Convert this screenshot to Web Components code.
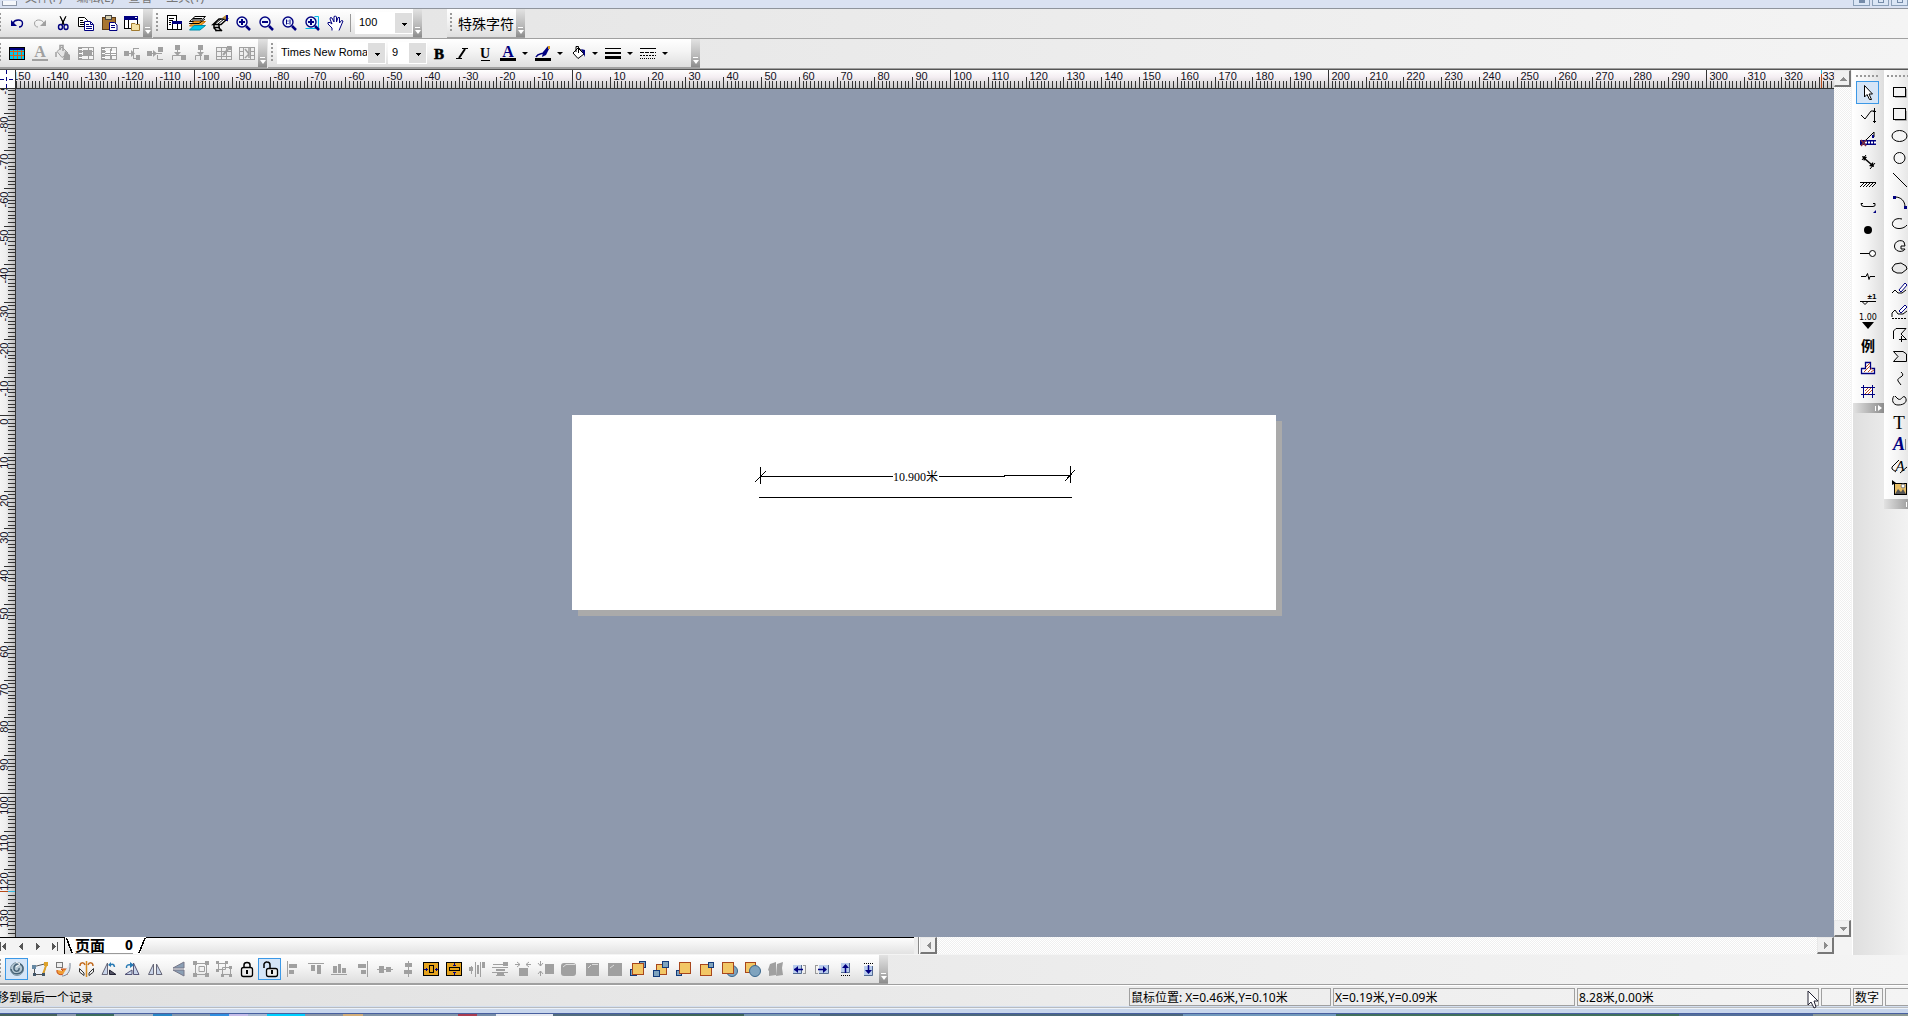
<!DOCTYPE html>
<html lang="zh-CN">
<head>
<meta charset="utf-8">
<title>绘图</title>
<style>
html,body{margin:0;height:100%}
body{overflow:hidden;font:12px/16px "Noto Sans","Noto Sans CJK SC",sans-serif;color:#000}
</style>
</head>
<body>
<draw-app></draw-app>
<script>
const G='#a0a0a0', N='#000080';
const r=(x,y,w,h,f,s)=>`<rect x="${x}" y="${y}" width="${w}" height="${h}" fill="${f||'none'}"${s?` stroke="${s}"`:''}/>`;
const p=(d,s,f,w)=>`<path d="${d}" stroke="${s||'none'}" fill="${f||'none'}"${w?` stroke-width="${w}"`:''}/>`;
const t=(s,x,y,size,extra)=>`<text x="${x}" y="${y}" font-size="${size}" text-anchor="middle" stroke="none" ${extra||''}>${s}</text>`;
const serif='font-family="Liberation Serif" ';
const lens=c=>`<circle cx="8" cy="8" r="5" fill="#eef6ff" stroke="${N}" stroke-width="1.4"/>`+p('M12 12L16 16',N,'',2.5)+c;
const gray=s=>p(s,G,'',1);
const tableGray=r(1.5,3.5,15,12,'#f4f4f4',G)+r(1,3,4,13,G)+p('M1 7.5H17M1 11.5H17M11.5 3V16',G)+p('M2 5.5H5M2 9.5H5M2 13.5H5','#fff');
const box=(x,y,w,h)=>r(x,y,w,h,G);
const orange=(x,y,s)=>r(x+.5,y+.5,s,s,'#f2c766','#a8461c');
const blueBox=(x,y,s)=>r(x+.5,y+.5,s,s,'#7fa3be','#123a7a');
const fold='#c9d5ea';
const pointer='M0 0V14L3 11L6 17L8 16L6 10H10Z';

const ICONS={
 undo:p('M5 9C7 5 14 5 14.500 9C14.500 12 13 13 11 13',N,'',1.4)+p('M3 6V12H9Z','',N),
 redo:p('M13 9C11 5 4 5 3.500 9C3.500 12 5 13 7 13',G,'',1)+p('M15 6V12H9Z','',G),
 cut:p('M6 2L10 11M12 2L8 11M6.500 3L10.500 11M11.500 3L7.500 11','#000')+`<g fill="none" stroke="${N}" stroke-width="1.400"><ellipse cx="6.500" cy="13" rx="2" ry="2.500"/><ellipse cx="12" cy="13" rx="2" ry="2.500"/></g>`,
 copy:p('M1.500 3.500H7.500L10.500 6.500V12.500H1.500Z','#000','#fff')+p('M3 6.500H6M3 8.500H8M3 10.500H8','#000')+p('M7.500 7.500H13.500L16.500 10.500V16.500H7.500Z',N,'#fff')+p('M9 10.500H12M9 12.500H15M9 14.500H15M13.500 8V10.500H16',N),
 paste:r(2.500,3.500,13,12,'#a87532','#5a3b18')+r(5.500,1.500,6,4,'#d8d0b0','#444')+p('M9.500 8.500H14.500L17 11V16.500H9.500Z',N,'#fff')+p('M11 11.500H15M11 13.500H15',N),
 props:r(1.500,2.500,13,12,'#fff','#000')+r(1,2,14,4,N)+p('M5.500 6V14','#000')+p('M8.500 9.500H12L13 10.500H16.500V16.500H8.500Z','#a07a30','#f4e1a4')+r(12,3,2,1,'#fff'),
 pageopt:r(2.500,1.500,9,14,'#fff','#000')+p('M4 4.500H9M4 6.500H8M4 8.500H6M4 10.500H6','#000')+r(7.500,7.500,9,8,'#fff','#000')+r(7,7,10,3,N)+p('M12.500 10V15','#000'),
 layers:p('M7 2.500H17.500L12 7.500H1.500Z','#000','#fff')+p('M5 4.500H14M4 6H13','#000')+p('M6 7.500H17.500L12 12H1.500Z','#c96b00','#efa52e')+p('M6 11.500H17.500L12 16H1.500Z','#008aa8','#00c8ec')+p('M1 9.500H11L17 5','#000'),
 hatch:p('M2 10.500L8 5H16L10 10.500ZM3 13.500H9M4 16.500H11M3 10V14L6 17M8 10V14L11 17','#000','#fff',1.500)+p('M4 10L10 5M7 10L13 5','#000')+p('M11 4L15 1L17 2V8L14 5Z','', '#b88b36')+r(15,1,2,6,N),
 zoomin:lens(p('M8 5V11M5 8H11',N,'',2)),
 zoomout:lens(p('M5 8H11',N,'',2)),
 zoom11:lens(p('M6.500 5.500V10.500M10 5.500V10.500M8 6.500V7.500M8 9V10',N)),
 zoomfit:p('M11.500 2.500H15.500V14.500H9','#00b8e8','#d8f6ff')+lens(p('M8 5V11M5 8H11',N,'',2))+p('M2.500 14.500H9','#00b8e8'),
 hand:p('M6 16.500V14L2 10V8.500H4L6 10L4 5L4.500 3.500L6 4L8 8V2.500L9.500 2L10.500 3V8L12 3.500H13.500V9L15.500 6.500L17 7L14.500 13L13 16.500',N,'#fff'),
 table:r(1.500,3.500,15,12,'#00c8f0','#000')+r(2,4,14,2,N)+p('M2 7.500H16M2 11.500H16M5.500 6V15M9.500 6V15M13.500 6V15','#d86018'),
 fontgray:t('A',9,13,16,serif+`font-weight="bold" fill="${G}"`)+r(1,15,16,2,G),
 bucketgray:p('M3 7.500L8 3L14 9L8 13.500Z',G,'#e4e4e4')+p('M6 6V1.500H9V7M2 8V13',G,'',1.5)+p('M11 7L16 11V16H9Z','',G),
 mergecells:tableGray+r(6,6,9,5,G),
 splitcells:tableGray+r(6,7,10,4,'#fff')+p('M5 9.500H16M10.500 5V15',G),
 rowleft:box(1,7,5,5)+gray('M6 9.500H11M10.500 4V15M10 4.500H16M10 14.500H16')+p('M8 6L12 9.500L8 13Z','',G)+box(13,11,4,5),
 rowright:box(1,7,5,5)+gray('M6 9.500H16M11.500 11V15.500H17')+p('M7 6L11 9.500L7 13Z','',G)+box(12,3,5,5),
 colup:box(6,1,5,5)+gray('M8.500 6V11M3.500 16V11.500H14.500V16')+box(12,11,5,5)+p('M5 8H12L8.500 12Z','',G),
 coldown:box(6,1,5,5)+gray('M8.500 6V16M3.500 16V11.500H10')+box(12,11,5,5)+p('M5 8H12L8.500 12Z','',G),
 rowsize:r(1.500,3.500,15,12,'#eee',G)+p('M1 7.500H17M1 12.500H17M6.500 3V16M11.500 3V16',G)+p('M8 11L15 3H12M15 3V6',G,'',2),
 colsize:r(1.500,3.500,15,12,'#eee',G)+p('M1 7.500H5M13 7.500H17M1 11.500H5M13 11.500H17M5.500 3V16M12.500 3V16',G)+p('M7 5L11 10L7 14M11 4V14',G,'',1.500),
 bold:t('B',9,15,15,serif+'font-weight="bold" style="stroke:#000;stroke-width:.6"'),
 italic:p('M12 5L6 14','#000','',2)+p('M9 4.500H15M3 14.500H9','#000'),
 under:t('U',9,14,14,serif+'font-weight="bold"')+p('M5 16.500H14','#000'),
 fontcol:t('A',9,13,16,serif+`font-weight="bold" fill="${N}"`)+r(1,14,16,3,'#000'),
 pencol:p('M2 13C5 7 10 13 14 4',N,'',1.5)+p('M9 8L14 2L16 3L12 11L8 13Z','',N)+r(14,2,2,3,'#d99b20')+r(1,14,16,3,'#000'),
 fillcol:p('M4 9L9 4L15 10L9 14.500Z','#000','#fff')+p('M7 8V2.500H9.500V9M10 4L14 9','#000')+p('M12 5L16 6V13L14 9Z','',N),
 lines:r(1,4,16,1,'#000')+r(1,8,16,2,'#000')+r(1,12,16,3,'#000'),
 dashes:`<g stroke="#000" fill="none"><path d="M1 4.500H17"/><path stroke-dasharray="4 1" d="M1 8.500H17"/><path stroke-dasharray="2 1" d="M1 11.500H17"/><path stroke-dasharray="1 1" d="M1 14.500H17"/></g>`,

 arrow:p('M5.500 2.500V14L8 11.500L10.500 16.500H12.500L10 11H13.500Z','#000','#fff'),
 poly:p('M2 9L6 13L12 5H15.500M15.500 2V17M14 5.500H17M14 15.500H17','#000'),
 measure:p('M4 14L15 3V8','#000')+r(1,11,16,5,N)+p('M6 13.500H17','#fff','','2')+p('M8.500 12V16M11.500 12V16M14.500 12V16',N)+p('M2 11L7 17M7 11L2 17','#803040','',1.5)+r(13,6,2,3,N),
 dim:p('M5 6L13 13','#000','',1.5)+p('M3 8L7 3M11 17L16 11','#000')+p('M3 4L8 5L5 9ZM10 14L14 10L15 15Z','','#000'),
 hatching:p('M1 7.500H17M1 12L5 8M4 12L8 8M7 12L11 8M10 12L14 8M13 12L17 8','#000'),
 brace:p('M2 5.500Q2 8.500 5 8.500H14Q17 8.500 16 5.500M2 5.500H4M14 5.500H16','#000')+p('M17 12V15H14Z','',N),
 dot:'<circle cx="9" cy="9" r="4" fill="#000"/>',
 pin:p('M1 9.500H11','#000')+'<circle cx="13.500" cy="9.500" r="3" fill="#fff" stroke="#000"/>',
 breakline:p('M2 9.500H7L8.500 6.500L10 12.500L11 9.500H16','#000'),
 level:p('M1 11.500H17M3 11.500L6 14.500L9 11.500','#000')+t('±1',13,9,8,'font-family="Liberation Sans" font-weight="bold"'),
 scale:t('1.00',9,7,8,'font-family="DejaVu Sans"')+p('M3 9H15L9 16Z','','#000'),
 legend:t('例',9,15,14,'font-family="Noto Sans CJK SC" font-weight="bold"'),
 shapeA:`<path d="M6.500 3.500H11.500V9.500H15.500V14.500H2.500V9.500H6.500Z" fill="#fff" stroke="${N}" stroke-width="1.300"/>`+p('M7 8L11 4M5 13L11 7M9 13L13 9M12 13L15 11','#c05020'),
 shapeB:r(4.500,5.500,9,7,'#fff',N)+p('M4.500 3V16M13.500 3V16M2 5.500H16M2 12.500H16',N)+p('M6 9L9 6M6 12L12 6M9 12L13 8','#c05020'),

 rect:p('M5 14.500H16.500V6','#aaa')+r(3.500,4.500,12,9,'#f4f4f4','#000'),
 square:p('M5 15.500H16.500V6','#aaa')+r(3.500,3.500,12,11,'#f4f4f4','#000'),
 ellipse:'<ellipse cx="9.500" cy="9" rx="7.500" ry="5.500" fill="#f4f4f4" stroke="#000"/>',
 circle:'<circle cx="9.500" cy="9" r="5.500" fill="#f4f4f4" stroke="#000"/>',
 line:p('M3 2L17 16','#000'),
 arc:p('M5 4C11 4 15 8 15 14','#000')+r(3,3,3,3,N)+r(14,13,3,3,N),
 oarc:p('M12 4C4 2 1 8 3 11C6 15 14 14 17 10','#000'),
 pie:p('M11 9V12H15C14 15 6 16 4.500 10C4 4 11 2 14 5L15 9Z','#000','#f0f0f0'),
 blob:p('M2 9L5 5L11 4L16 7L17 10L12 14H7L3 12Z','#000','#e8e8e8'),
 free:p('M2 12L5 9L8 12H12L16 9','#000')+p('M9 9L15 2L17 4L11 11Z',N,'#fff'),
 freeclosed:p('M2 14V10L5 7L8 11H13L17 8','#000')+`<path d="M2 15.500H17" stroke="#000" stroke-dasharray="2 1"/>`+p('M9 8L15 2L17 4L11 10Z',N,'#fff'),
 polyline:p('M3.500 14V6L6 3.500H16L11 9L16.500 14.500H9M11.500 11V17','#000'),
 flag:p('M3.500 4.500H13L16.500 7V14.500H3.500L8 9.500Z','#000','#e8e8e8'),
 curve:p('M11 3C17 8 6 8 8 12L11 16','#000'),
 bag:p('M4 5C1 9 3 14 8 14C15 14 18 10 15 6C12 4 12 10 8 8L5 5','#000','#eee'),
 textT:t('T',9,16,19,serif),
 textA:t('A',9,15,18,serif+`font-style="italic" font-weight="bold" fill="${N}"`)+p('M15.500 4V15','#888'),
 artA:t('A',10,14,15,serif+'font-style="italic"')+p('M2 10L9 3M10 16L17 10M2 10V12L6 15','#000'),
 image:r(4.500,4.500,12,11,'#e7bd63','#000')+p('M5 15L8 10L11 13L13 10L16 15Z','','#555')+'<circle cx="13" cy="7" r="2" fill="#fff" stroke="#777"/>'+p('M2 1L6 4L2 6Z','','#000'),

 spiral:`<circle cx="9" cy="9" r="6.500" fill="#b5c8d4" stroke="#7f96a6"/>`+p('M3 9C4 16 15 15 15 8C14 2 5 3 6 9C7 13 12 11 11 8','#466276','',1.5)+p('M8 2L12 4L8 7','#fff'),
 skew:p('M3.500 6.500L15.500 3.500L12.500 14.500H3.500Z','#555','#edf2fa')+p('M12 14L16 3','#e0a32a','',2)+r(1,5,4,4,'#6588a4')+r(13,2,4,4,'#dda22b')+r(2,13,3,3,'#405568')+r(11,13,3,3,'#405568'),
 rotate:r(2.500,2.500,6,5,'#eee','#777')+p('M3 10C2 15 8 16 11 13L13 15V9L7 9L9 11','#c84a16','#ef9d36')+p('M16 3C17 13 12 16 8 16','#7b8797','#e2e8ef'),
 fliph:p('M9.500 1V17','#d68a20','',1.5)+p('M3 6C3 2 7 2 8 5M11 5C12 2 16 2 16 6','#c06a20','',1.5)+p('M2.500 8.500L7 13V15.500L2.500 12ZM16.500 8.500L12 13V15.500L16.500 12Z','#333','#eee'),
 rot90l:p('M7.500 3V14.500H2Z','#667',fold)+p('M9.500 10L16 14.500H9.500Z','#223','#556')+p('M10 5Q14 3 14.500 7','#287ab4','',1.5)+p('M11 2V7L8 5Z','','#287ab4'),
 rot90r:p('M10.500 3V14.500H16Z','#557',fold)+p('M9 10L2 14.500H9Z','#557',fold)+p('M3.500 8Q3 4 8 5','#287ab4','',1.5)+p('M7 2L11 5L7 8Z','','#287ab4'),
 mirrorh:p('M7.500 4V14.500H2.500ZM10.500 4V14.500H16Z','#667',fold),
 mirrorv:p('M15 2V8H4ZM15 10V16L4 10Z','#778','#8a9fb5'),
 group:p('M3.500 3.500H14.500V14.500H3.500ZM7 6.500H12.500V11.500H7Z',G)+[[1,1],[13,1],[1,13],[13,13]].map(a=>box(a[0],a[1],4,4)).join(''),
 ungroup:p('M3.500 3.500H10.500V9.500H3.500ZM7.500 7.500H15.500V14.500H7.500Z',G)+[[1,1],[10,1],[1,9],[14,6],[6,14],[14,14]].map(a=>box(a[0],a[1],3,3)).join(''),
 lock:p('M6 8V5Q6 2.500 9 2.500Q12 2.500 12 5V8','#000','',1.500)+`<rect x="3.500" y="7.500" width="11" height="9" rx="2" fill="#eee" stroke="#000" stroke-width="1.300"/>`+p('M9 10V14M8 11.500H10','#000','',2),
 unlock:p('M3 8V4Q4 1.500 6 2Q9 2 9 5V8','#000','',1.500)+`<rect x="5.500" y="8.500" width="11" height="8" rx="2" fill="#eee" stroke="#000" stroke-width="1.300"/>`+p('M11 10V14M10 11.500H12','#000','',2),
 alleft:gray('M3.500 1V17')+box(5,4,8,4)+box(5,10,5,4),
 altop:gray('M1 3.500H17')+box(4,5,4,6)+box(10,5,4,9),
 albottom:gray('M1 14.500H17')+box(3,6,4,7)+box(8,4,3,9)+box(12,8,4,5),
 alright:gray('M14.500 1V17')+box(5,4,8,4)+box(8,10,5,4),
 almid:gray('M1 9.500H17')+box(3,6,5,7)+box(10,7,5,5),
 alcenter:gray('M9.500 1V17')+box(6,3,7,4)+box(5,10,8,4),
 cenh:r(1.500,2.500,15,13,'#e5a31e','#000')+r(7.500,5.500,4,7,'none','#000')+p('M2 9.500H6M13 9.500H16M4.500 8V11M14.500 8V11',N),
 cenv:r(1.500,2.500,15,13,'#e5a31e','#000')+r(4.500,7.500,10,3,'none','#000')+p('M9.500 3V6M9.500 12V15M8 5.500H11M8 12.500H11',N),
 spaceh:box(3,6,1,8)+box(7,2,1,15)+box(9,5,2,9)+box(12,2,1,15)+box(1,7,4,4)+box(14,2,3,6),
 spacev:p('M2 4.500H12M1 7.500H17M1 12.500H17M5 15.500H14',G)+box(12,2,5,4)+box(5,9,9,2)+box(6,13,7,2),
 samew:box(5,8,9,8)+p('M1 4.500H6M12 4.500H17M3 2L6 4.500L3 7M15 2L12 4.500L15 7',G),
 sameh:box(8,4,9,10)+p('M3.500 1V6M3.500 11V16M1 3L3.500 6L6 3M1 14L3.500 11L6 14',G),
 sameboth:`<rect x="1" y="3" width="15" height="13" rx="3" fill="${G}"/>`+p('M3 7L6 4.500H15','#ddd'),
 same2:box(3,3,13,13)+p('M5 8L8 5M9 4.500H15','#ddd'),
 same3:box(2,3,14,13)+p('M4 8L8 5','#ddd'),
 front:blueBox(10,1,6)+blueBox(1,9,6)+orange(3,3,11),
 back:orange(4,4,10)+blueBox(10,1,6)+blueBox(1,10,6),
 forward:blueBox(1,10,5)+orange(4,2,11),
 backward:orange(2,4,11)+blueBox(10,2,5),
 above:`<circle cx="11" cy="11" r="5.500" fill="#7fa3be" stroke="#37658c"/>`+orange(1,2,11),
 below:orange(1,2,10)+`<circle cx="11" cy="11" r="5.500" fill="#7fa3be" stroke="#37658c"/>`,
 order:p('M3 4L9 2V15L2 16V11L1 10ZM10 4L16 2L15 8L16 15L9 16Z','',G),
 nleft:r(3,5,9,9,'#b9ccec')+p('M3 13.500H11.500V5','#536b91')+p('M4 9.500H13',N,'',1.5)+p('M8 6V13L4 9.500Z','',N)+p('M13 5.500H16M13 13.500H16M15.500 6V13','#999'),
 nright:r(6,5,9,9,'#b9ccec')+p('M6 13.500H15.500V5','#536b91')+p('M5 9.500H12',N,'',1.5)+p('M10 6V13L14 9.500Z','',N)+p('M2 5.500H5M2 13.500H5M2.500 6V13','#999'),
 nup:r(5,3,9,10,'#b9ccec')+p('M5 12.500H13.500V3','#536b91')+p('M9.500 5V13',N,'',1.5)+p('M6 8H13L9.500 4Z','',N)+`<path d="M5 15.500H14" stroke="#000" stroke-dasharray="1 1"/>`,
 ndown:r(5,6,9,10,'#b9ccec')+p('M5 15.500H13.500V6','#536b91')+p('M9.500 5V12',N,'',1.5)+p('M6 10H13L9.500 14Z','',N)+`<path d="M5 3.500H14" stroke="#000" stroke-dasharray="1 1"/>`
};

function define(name, html, setup){
  const tpl=document.createElement('template'); tpl.innerHTML=html;
  customElements.define(name, class extends HTMLElement{
    constructor(){super();this.attachShadow({mode:'open'}).append(tpl.content.cloneNode(true));}
    connectedCallback(){ if(setup && !this.ready){this.ready=true;setup(this,this.shadowRoot);} }
  });
}

define('tool-button',`<style>
:host{display:block;flex:none;width:23px;height:22px}
:host([menu]){width:35px}
:host([tall]){height:23px}
button{display:flex;align-items:flex-start;box-sizing:border-box;width:100%;height:100%;margin:0;padding:1px 2px 0;border:1px solid transparent;background:none;gap:5px;color:#000}
:host([pressed]) button{background:#d5e5f7;border-color:#3b98e6}
svg{flex:none;width:18px;height:18px;overflow:visible}
i{display:none;align-self:center;border:3px solid transparent;border-top:3px solid #000;border-bottom:0;flex:none}
:host([menu]) i{display:block}
</style><button type="button"><svg viewBox="0 0 18 18" fill="#000"></svg><i></i></button>`,(el,root)=>{
  root.querySelector('svg').innerHTML=ICONS[el.getAttribute('icon')];
  root.querySelector('button').setAttribute('aria-label',el.getAttribute('icon'));
});

define('tool-bar',`<style>
:host{display:flex;flex:none;align-items:center;box-sizing:border-box;height:29px;background:linear-gradient(#fff,#f4f4f4 45%,#dedede);border-bottom:1px solid #a0a0a0}
.grip{flex:none;width:2px;height:20px;margin:0 4px 0 3px;background:repeating-linear-gradient(#999 0 2px,transparent 2px 4px)}
:host([edge]) .grip{margin:0 4px 0 -1px}
.tools{display:flex;align-items:center}
.more{flex:none;align-self:stretch;width:9px;display:flex;flex-direction:column;justify-content:flex-end;align-items:center;gap:2px;padding:0 0 3px;border:0;background:linear-gradient(#e2e2e2,#b8b8b8 60%,#8c8c8c)}
.more:before{content:"";width:5px;height:1px;background:#fff}
.more:after{content:"";border:3px solid transparent;border-top:4px solid #fff;border-bottom:0}
:host([vertical]){flex-direction:column;height:auto;width:31px;padding-right:3px;border:0;background:linear-gradient(90deg,#fff,#f4f4f4 45%,#dedede)}
:host([vertical]) .grip{width:23px;height:2px;margin:5px 0 4px;background:repeating-linear-gradient(90deg,#999 0 2px,transparent 2px 4px)}
:host([vertical]) .tools{flex-direction:column;width:23px}
:host([vertical]) .more{width:auto;height:10px;margin-right:-3px;flex-direction:row;align-items:center;padding:0 2px;background:linear-gradient(90deg,#e2e2e2,#8c8c8c)}
:host([vertical]) .more:before{width:1px;height:5px}
:host([vertical]) .more:after{border:3px solid transparent;border-left:4px solid #fff;border-right:0}
</style><span class="grip"></span><div class="tools"></div><slot></slot><button class="more" type="button" aria-label="更多"></button>`,(el,root)=>{
  const tools=root.querySelector('.tools');
  for(const name of (el.getAttribute('tools')||'').split(' ').filter(Boolean)){
    const b=document.createElement('tool-button');
    b.setAttribute('icon',name.replace('*',''));
    if(name.endsWith('*')) b.setAttribute('pressed','');
    if(el.hasAttribute('tall')) b.setAttribute('tall','');
    tools.append(b);
  }
});

define('combo-box',`<style>
:host{display:block;flex:none;height:22px;width:var(--w)}
select{appearance:none;box-sizing:border-box;width:100%;height:100%;margin:0;padding:0 18px 2px 3px;border:1px solid #fff;border-radius:0;color:#000;font:11px/14px "Liberation Sans",sans-serif;text-overflow:clip;
background:linear-gradient(#000,#000) right 5px top 10px/5px 1px no-repeat,linear-gradient(#000,#000) right 6px top 11px/3px 1px no-repeat,linear-gradient(#000,#000) right 7px top 12px/1px 1px no-repeat,linear-gradient(#dedede,#dedede) right 0 top 0/17px 100% no-repeat,#fff}
</style><select><option></option></select>`,(el,root)=>{
  root.querySelector('option').textContent=el.getAttribute('value');
  root.querySelector('select').setAttribute('aria-label',el.getAttribute('label'));
});

define('title-strip',`<style>
:host{display:flex;flex:none;align-items:flex-end;justify-content:space-between;box-sizing:border-box;height:9px;overflow:hidden;background:#dae2f2;border-bottom:1px solid #8f949c}
nav{display:flex;align-items:flex-end;gap:14px;padding:0 0 2px 2px}
nav button{border:0;padding:0;background:none;color:#777;font:12px/16px "Noto Sans","Noto Sans CJK SC",sans-serif}
.app{box-sizing:border-box;width:15px;height:5px;background:#f5f7fa;border:1px solid #8d97a8;border-top:0;margin-right:-6px}
.win{display:flex;gap:2px;padding-bottom:2px}
.win button{display:flex;justify-content:center;align-items:flex-start;box-sizing:border-box;width:17px;height:10px;padding:3px 0 0;border:1px solid #8ca0b8;background:#dbe6f5}
.win i{width:6px;height:3px;box-sizing:border-box;border:1px solid #758ba8;border-top:0}
.win button:first-child i{background:#758ba8}
</style><nav><span class="app"></span><button>文件(F)</button><button>编辑(E)</button><button>查看</button><button>工具(T)</button></nav>
<div class="win"><button aria-label="最小化"><i></i></button><button aria-label="还原"><i></i></button><button aria-label="关闭"><i></i></button></div>`);

const UNIT=96/25.4;
define('scale-ruler',`<style>
:host{display:block;position:relative;overflow:hidden;min-width:0;min-height:0;box-sizing:border-box}
:host([axis=x]){background:linear-gradient(#fff,#f4eef2 40%,#c8c8c8);border-bottom:1px solid #333}
:host([axis=y]){background:linear-gradient(90deg,#f4f4f4,#eee 40%,#bcbcbc);border-right:1px solid #333}
svg{display:block;shape-rendering:crispEdges}
text{font:11px "Liberation Sans",sans-serif;fill:#112}
</style><svg></svg>`,(el,root)=>{
  const horizontal=el.getAttribute('axis')==='x', origin=+el.getAttribute('origin');
  const from=+el.getAttribute('from'), to=+el.getAttribute('to'), mark=+el.getAttribute('mark');
  let out='', d='';
  for(let i=from;i<=to;i++){
    const c=Math.round(origin+i*UNIT)+.5, far=horizontal?18:15;
    const near=i%100===0?0:i%10===0?(horizontal?7:4):(horizontal?11:8);
    d+=horizontal?`M${c} ${near}V${far}`:`M${near} ${c}H${far}`;
    if(i%10===0) out+=horizontal?`<text x="${c+3}" y="10">${i}</text>`:`<text text-anchor="end" transform="translate(8 ${c+3}) rotate(-90)">${i}</text>`;
  }
  const end=Math.ceil(origin+to*UNIT)+4;
  const svg=root.querySelector('svg');
  svg.setAttribute('width',horizontal?end:15); svg.setAttribute('height',horizontal?18:end);
  svg.innerHTML=`<path d="${d}" stroke="#333"/>`+out+(horizontal?`<path d="M${mark} 0V18" stroke="#b84a18"/><path d="M${mark} 0V4" stroke="#30b8e0"/>`:`<path d="M0 ${mark}H8" stroke="#b84a18"/><path d="M8 ${mark}H15" stroke="#30b8e0"/>`);
});

define('scroll-bar',`<style>
:host{display:flex;justify-content:space-between;box-sizing:border-box;min-width:0;min-height:0;background:repeating-conic-gradient(#fff 0 25%,#efefef 0 50%) 0 0/2px 2px}
:host([dir=v]){flex-direction:column;width:17px}
button{display:flex;align-items:center;justify-content:center;flex:none;box-sizing:border-box;width:17px;height:17px;margin:0;padding:0;border:1px solid #e8e8e8;border-right:2px solid #777;border-bottom:2px solid #777;background:#f0f0f0}
svg{width:9px;height:9px;fill:#8c8c8c;shape-rendering:crispEdges}
</style><button aria-label="向前"><svg viewBox="0 0 9 9"><path/></svg></button><button aria-label="向后"><svg viewBox="0 0 9 9"><path/></svg></button>`,(el,root)=>{
  const v=el.getAttribute('dir')==='v', [a,b]=root.querySelectorAll('path');
  a.setAttribute('d',v?'M1 7L5 3L9 7Z':'M7 0V9L3 4.500Z'); b.setAttribute('d',v?'M1 3H9L5 7Z':'M3 0L7 4.500L3 9Z');
});

define('draw-sheet',`<style>
:host{display:block;width:704px;height:195px;background:#fff;box-shadow:6px 6px 0 #aaa}
svg{display:block;width:704px;height:195px;shape-rendering:crispEdges}
text{font:12px "Liberation Serif","Noto Sans CJK SC",serif}
</style><svg viewBox="0 0 704 195" fill="none" stroke="#000">
<path d="M188.500 52V69M183 67L194 56M188 61.500H321M367 61.500H433M432 60.500H499M498.500 51V68M493 66L503 55M187 82.500H500"/>
<text x="321" y="66" fill="#000" stroke="none">10.900米</text></svg>`);

define('page-tabs',`<style>
:host{display:flex;box-sizing:border-box;height:17px;background:linear-gradient(#fff,#e2e2e2)}
.nav{display:flex;align-items:center;box-sizing:border-box;width:65px;border-top:1px solid #000;border-right:1px solid #000;background:#f4f4f4}
.nav button{flex:1;border:0;padding:0;background:none;height:15px;display:flex;justify-content:center;align-items:center}
.nav button:first-child{flex:0 0 12px;justify-content:flex-start}
svg{display:block;flex:none;shape-rendering:crispEdges}
.tab{display:flex;flex:none;align-items:center;border:0;padding:0;background:none;height:17px}
.tab span{display:flex;gap:20px;background:#fff;font:bold 15px/16px "Noto Sans CJK SC",sans-serif;height:16px;border-bottom:1px solid #999}
.tab b{font-size:13px}
.rest{flex:1;border-top:1px solid #000}
</style><div class="nav">
<button aria-label="第一页"><svg width="8" height="9" fill="#555"><path d="M0 0H1V9H0ZM6 0V9L2 4.500Z"/></svg></button>
<button aria-label="上一页"><svg width="6" height="9" fill="#555"><path d="M5 0V9L1 4.500Z"/></svg></button>
<button aria-label="下一页"><svg width="6" height="9" fill="#555"><path d="M1 0V9L5 4.500Z"/></svg></button>
<button aria-label="最后一页"><svg width="8" height="9" fill="#555"><path d="M1 0V9L5 4.500ZM6 0H7V9H6Z"/></svg></button></div>
<button class="tab"><svg width="10" height="17"><path d="M1 0H10V17H7Z" fill="#fff"/><path d="M1.500 1L7 16" stroke="#000" stroke-width="1.500"/></svg><span>页面<b>0</b></span><svg width="13" height="17"><path d="M0 0H13L7 17H0Z" fill="#fff"/><path d="M12 1L6 16" stroke="#000" stroke-width="1.500"/></svg></button><div class="rest"></div>`);

define('status-bar',`<style>
:host{display:flex;flex:none;align-items:flex-end;box-sizing:border-box;height:21px;gap:2px;background:linear-gradient(90deg,#e0e0e0,#f4f4f4);border-top:1px solid #fff}
.hint{flex:1;margin-left:-3px;line-height:16px;white-space:nowrap}
.cell{flex:none;box-sizing:border-box;height:18px;border:1px solid #a0a0a0;padding:0 1px;line-height:18px;white-space:nowrap}
.wide{width:242px}.mouse{width:202px}.small{width:30px}.last{width:23px;border-right:0}
</style><div class="hint">移到最后一个记录</div><div class="cell mouse">鼠标位置: X=0.46米,Y=0.10米</div><div class="cell wide">X=0.19米,Y=0.09米</div><div class="cell wide">8.28米,0.00米</div><div class="cell small"></div><div class="cell small">数字</div><div class="cell last"></div>`);

define('desk-strip',`<style>
:host{display:block;flex:none}
.frame{height:7px;background:linear-gradient(#d4dfef 0 1px,#b9bcc0 1px 2px,#edf2f8 2px 3px,#c8d6ec 3px)}
.task{box-sizing:border-box;height:3px;border-top:1px solid #4860a0;background:linear-gradient(90deg,#47645c 0 3%,#8d9bab 3% 4%,#3c6d5d 4% 6%,#a7b5c3 6% 8%,#2986c5 8% 9%,#8498ae 9% 11%,#318fe0 11% 12%,#c5bce9 12% 13%,#a8bad3 13% 14%,#00d0ff 14% 16%,#8995a6 16% 18%,#d2ad78 18% 19%,#8295a8 19% 24%,#a93d50 24% 25%,#768ca8 25% 26%,#e6e9f0 26% 29%,#526d80 29% 33%,#3e6659 33% 39%,#7797ae 39% 43%,#4c687d 43% 62%,#7199bc 62% 70%,#40705d 70% 88%,#536f99 88% 95%,#8d9a95 95%)}
</style><div class="frame"></div><div class="task"></div>`);

define('draw-app',`<style>
:host{display:flex;flex-direction:column;height:100vh;overflow:hidden;position:relative}
.row{display:flex;flex:none;box-sizing:border-box;height:30px;background:linear-gradient(90deg,#e2e2e2,#f4f4f4);border-bottom:1px solid #a0a0a0;align-items:flex-start;overflow:hidden}
.row tool-bar+tool-bar{margin-left:1px}
.row .apart.apart{margin-left:25px}
.sep{width:1px;height:18px;background:#999;margin:0 4px}
.char{border:0;background:none;padding:0 0 0 2px;margin:0 2px 0 0;font:14px/20px "Noto Sans CJK SC",sans-serif;color:#000}
.end{width:20px}
.main{display:flex;flex:1;min-height:0;box-sizing:border-box;border-top:1px solid #555}
.work{flex:1;min-width:0;display:grid;grid-template:19px minmax(0,1fr) 18px / 16px minmax(0,1fr) 18px;background:#f4f4f4}
.corner{display:block;background:#fff;border-bottom:1px solid #333;border-right:1px solid #333;width:15px;height:18px;shape-rendering:crispEdges}
.vs{grid-area:1/3/3/4}
.canvas{position:relative;overflow:hidden;background:#8e99ad}
draw-sheet{position:absolute;left:556px;top:326px}
.foot{grid-area:3/1/4/3;display:grid;grid-template-columns:minmax(0,1fr) 6px minmax(0,1fr);align-items:start}
.split{height:17px;background:linear-gradient(90deg,#eee 0 4px,#888 4px 5px,#fff 5px)}
.foot scroll-bar{height:17px}
.dock{flex:none;display:flex;align-items:flex-start;width:56px;box-sizing:border-box;overflow:hidden;background:linear-gradient(90deg,#dfdfdf,#f2f2f2);border-left:1px solid #fff}
.pointer{position:absolute;right:89px;bottom:6px;width:12px;height:20px}
combo-box+combo-box{margin-left:2px}
</style>
<title-strip></title-strip>
<div class="row">
<tool-bar edge tools="undo redo cut copy paste props"></tool-bar>
<tool-bar tools="pageopt layers hatch zoomin zoomout zoom11 zoomfit hand"><span class="sep"></span><combo-box label="缩放" value="100" style="--w:58px"></combo-box></tool-bar>
<tool-bar class="apart"><button class="char" type="button">特殊字符</button></tool-bar>
</div>
<div class="row">
<tool-bar edge tools="table fontgray bucketgray mergecells splitcells rowleft rowright colup coldown rowsize colsize"></tool-bar>
<tool-bar><combo-box label="字体" value="Times New Roman" style="--w:109px"></combo-box><combo-box label="字号" value="9" style="--w:39px"></combo-box><tool-button icon="bold"></tool-button><tool-button icon="italic"></tool-button><tool-button icon="under"></tool-button><tool-button menu icon="fontcol"></tool-button><tool-button menu icon="pencol"></tool-button><tool-button menu icon="fillcol"></tool-button><tool-button menu icon="lines"></tool-button><tool-button menu icon="dashes"></tool-button><span class="end"></span></tool-bar>
</div>
<div class="main">
<div class="work">
<svg class="corner" viewBox="0 0 15 18"><path d="M6.500 0V4M6.500 7V11M6.500 14V18M0 9.500H4M9 9.500H13" stroke="#000080" fill="none"/></svg>
<scale-ruler axis="x" origin="556" from="-150" to="340" mark="1805.500"></scale-ruler>
<scroll-bar class="vs" dir="v"></scroll-bar>
<scale-ruler axis="y" origin="326" from="-90" to="165" mark="802.500"></scale-ruler>
<div class="canvas"><draw-sheet></draw-sheet></div>
<div class="foot"><page-tabs></page-tabs><span class="split"></span><scroll-bar dir="h"></scroll-bar></div>
</div>
<div class="dock">
<tool-bar vertical tall tools="arrow* poly measure dim hatching brace dot pin breakline level scale legend shapeA shapeB"></tool-bar>
<tool-bar vertical tools="rect square ellipse circle line arc oarc pie blob free freeclosed polyline flag curve bag textT textA artA image"></tool-bar>
</div>
</div>
<div class="row">
<tool-bar edge tools="spiral* skew rotate fliph rot90l rot90r mirrorh mirrorv group ungroup lock unlock* alleft altop albottom alright almid alcenter cenh cenv spaceh spacev samew sameh sameboth same2 same3 front back forward backward above below order nleft nright nup ndown"></tool-bar>
</div>
<status-bar></status-bar>
<desk-strip></desk-strip>
<svg class="pointer" viewBox="-1 -1 12 20"><path d="${pointer}" fill="#fff" stroke="#223"/></svg>`);
</script>
</body>
</html>
